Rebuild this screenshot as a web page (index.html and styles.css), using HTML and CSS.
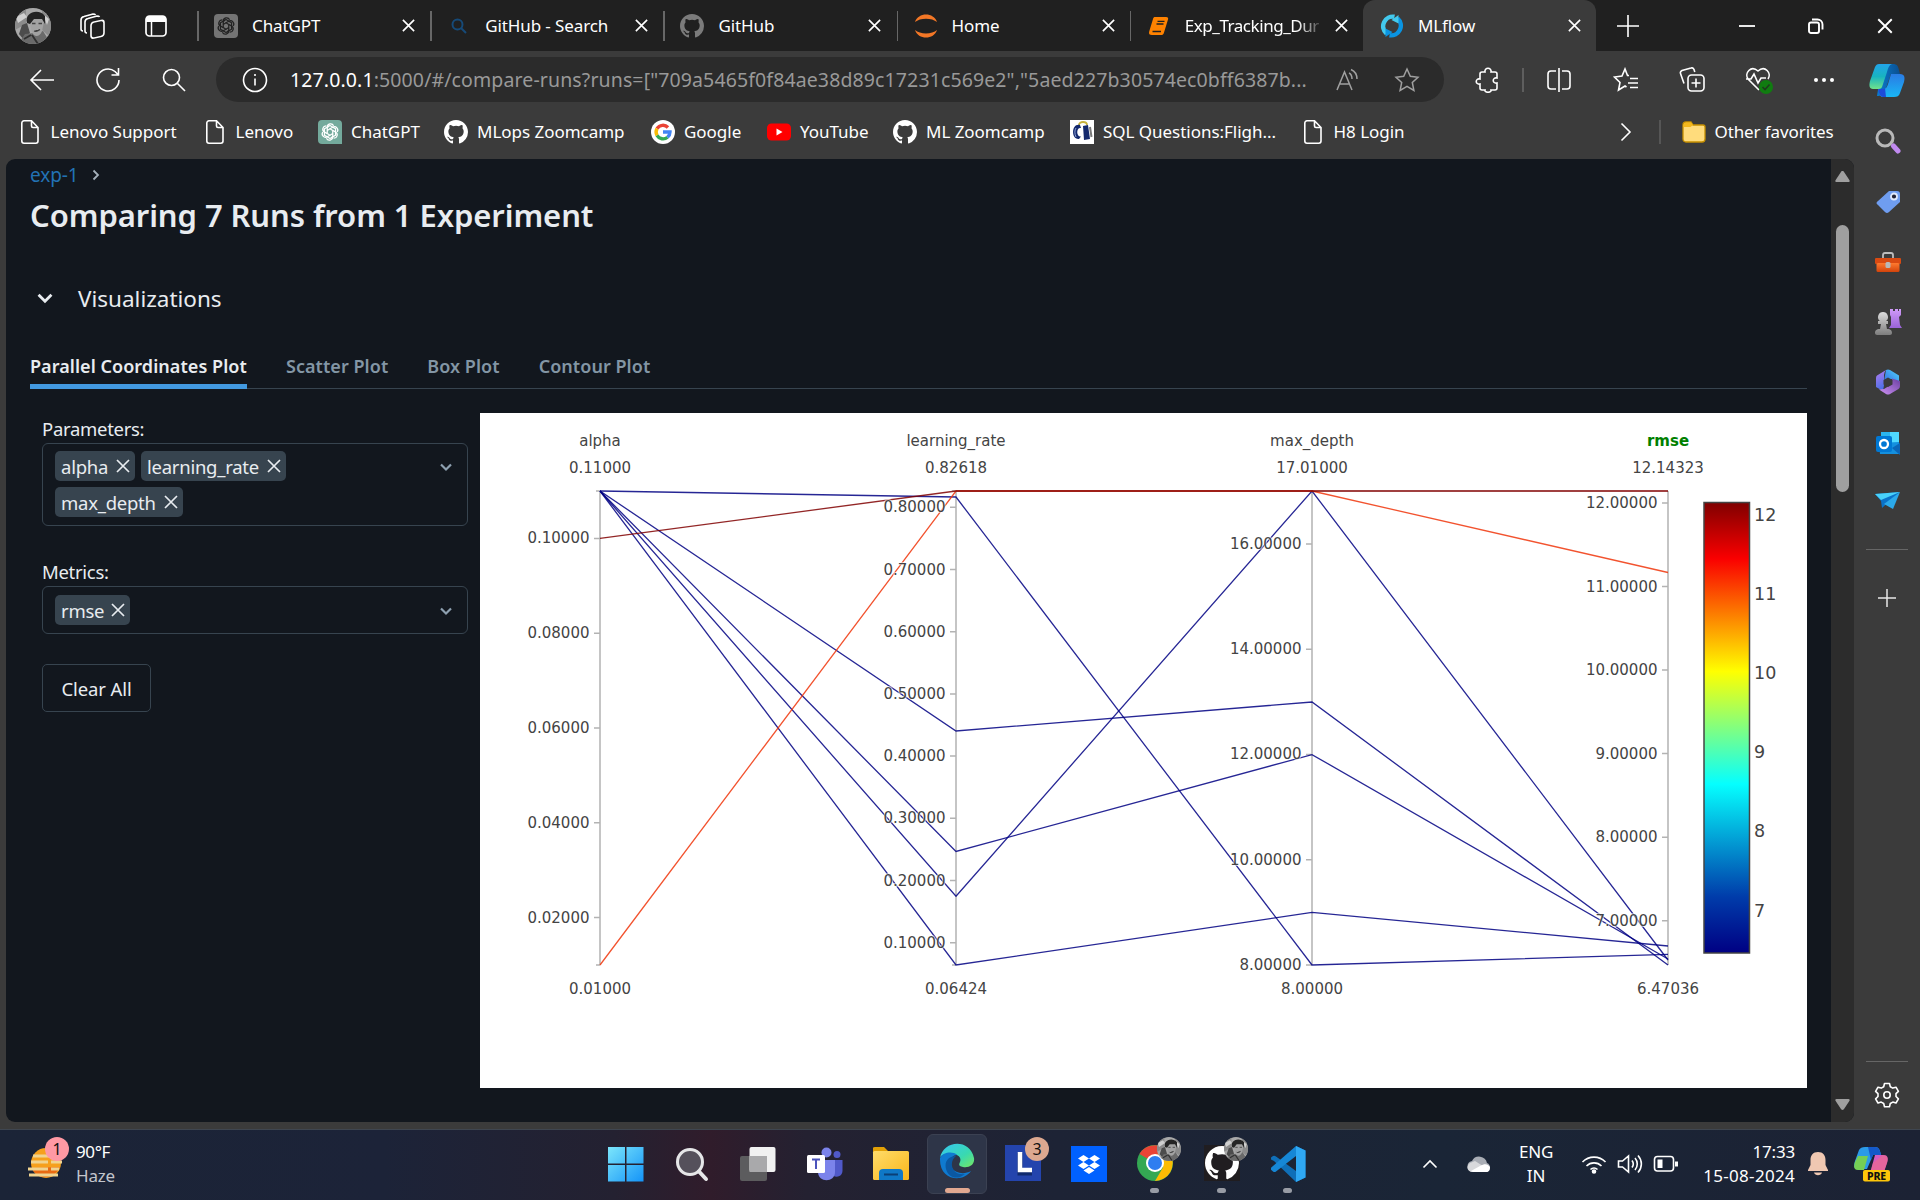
FILE: index.html
```html
<!DOCTYPE html>
<html lang="en">
<head>
<meta charset="utf-8">
<title>MLflow</title>
<link rel="stylesheet" href="styles.css">
</head>
<body>
<svg class="sprite" width="0" height="0" aria-hidden="true">
  <symbol id="close" viewBox="0 0 16 16"><path d="M2 2l12 12M14 2L2 14" fill="none" stroke="currentColor" stroke-width="1.7"/></symbol>
  <symbol id="doc" viewBox="0 0 20 26"><path d="M4 1.8h7.5L18 8.5V22a2.2 2.2 0 0 1-2.2 2.2H4A2.2 2.2 0 0 1 1.800 22V4A2.200 2.200 0 0 1 4 1.800zM11.500 2v5a1.500 1.500 0 0 0 1.500 1.500h5" fill="none" stroke="currentColor" stroke-width="1.6"/></symbol>
  <symbol id="github" viewBox="0 0 16 16"><path fill="currentColor" d="M8 0C3.580 0 0 3.580 0 8c0 3.540 2.290 6.530 5.470 7.590.4.070.55-.17.55-.38 0-.19-.01-.82-.01-1.490-2.010.37-2.530-.49-2.690-.94-.09-.23-.48-.94-.82-1.130-.28-.15-.68-.52-.01-.53.630-.01 1.080.58 1.230.82.720 1.210 1.870.87 2.330.66.070-.52.280-.87.510-1.070-1.780-.2-3.640-.89-3.640-3.950 0-.87.310-1.590.820-2.150-.08-.2-.36-1.020.080-2.120 0 0 .670-.21 2.200.82a7.600 7.600 0 0 1 4 0c1.530-1.040 2.200-.82 2.200-.82.440 1.100.160 1.920.080 2.120.510.56.820 1.270.820 2.150 0 3.070-1.870 3.750-3.650 3.950.290.25.540.73.540 1.480 0 1.070-.01 1.930-.01 2.200 0 .21.150.46.550.38A8 8 0 0 0 16 8c0-4.420-3.580-8-8-8z"/></symbol>
  <symbol id="gpt" viewBox="0 0 24 24"><g fill="none" stroke="currentColor" stroke-width="1.500" stroke-linejoin="round"><path id="petal" d="M12 8.200L8.700 10.100V6.200a4 4 0 0 1 7.600-1.700M8.700 6.200l3.300-1.900 4.600 2.700"/><use href="#petal" transform="rotate(60 12 12)"/><use href="#petal" transform="rotate(120 12 12)"/><use href="#petal" transform="rotate(180 12 12)"/><use href="#petal" transform="rotate(240 12 12)"/><use href="#petal" transform="rotate(300 12 12)"/></g></symbol>
  <symbol id="chev" viewBox="0 0 14 14"><path d="M2 4.500l5 5 5-5" fill="none" stroke="currentColor" stroke-width="2.200"/></symbol>
  <symbol id="face" viewBox="0 0 36 36"><clipPath id="fc"><circle cx="18" cy="18" r="18"/></clipPath><g clip-path="url(#fc)"><rect width="36" height="36" fill="#a9a9a9"/><path d="M0 0h11v16L0 22zM27 0h9v30l-9-8z" fill="#8b8b8b"/><path d="M1 9l8-4 3 4-9 6zM28 6l6 5-2 6z" fill="#cfcfcf"/><path d="M7 17l5-2 3 10-6 7-5-6z" fill="#4c4c4c"/><path d="M3 36l7-10 9-1 9-2 8 13z" fill="#6a6a6a"/><path d="M14 12c0-7 15-7 15 2l-2 9c-2 6-8 7-10 1z" fill="#a2a2a2"/><path d="M12 15C9 4 24 0 30 8l0 8-3-5-8 0-4 5z" fill="#242424"/><path d="M17 15.500h3.500m3 0h3.500M19 23c2 1 4 0 6-1.500" stroke="#444" stroke-width="1.300"/><path d="M17 27l6 9M9 31l7-4" stroke="#303030" stroke-width="1.800"/></g></symbol>
  <symbol id="copilot" viewBox="0 0 36 34"><path d="M13 1h11c4 0 5 2 6 6l1 4h-9l-6 17c-1 4-4 5-8 5z" fill="url(#cpa)"/><path d="M10 1h13c-3 1-4 4-5 8l-5 15c-1 2-3 2-5 2H4c-4 0-4-4-3-8L6 4c1-2 2-3 4-3z" fill="url(#cpb)"/><path d="M9 26h5c3 0 4-2 5-5l3-10h9c5 0 5 4 4 8l-4 11c-1 3-3 4-6 4H14c-4 0-3-5-5-8z" fill="url(#cpc)"/><path d="M9 26h5l2-1 1 9h-3c-3 0-4-4-5-8z" fill="#1d4bd8"/></symbol>
  <defs>
    <linearGradient id="cpa"><stop stop-color="#0a7bd0"/><stop offset="1" stop-color="#0b4f90"/></linearGradient>
    <linearGradient id="cpb" x2="0" y2="1"><stop stop-color="#22a4ea"/><stop offset=".5" stop-color="#18b3c0"/><stop offset="1" stop-color="#6fe28b"/></linearGradient>
    <linearGradient id="cpc" x2="0" y2="1"><stop stop-color="#2a7be4"/><stop offset="1" stop-color="#19b6f5"/></linearGradient>
    <linearGradient id="edgeb" x2="1" y2="1"><stop stop-color="#36c6f4"/><stop offset=".6" stop-color="#39d9b0"/><stop offset="1" stop-color="#77e860"/></linearGradient>
    <linearGradient id="win" x2="1" y2="1"><stop stop-color="#7ce6fb"/><stop offset="1" stop-color="#1494f8"/></linearGradient>
    <linearGradient id="org" x2="0" y2="1"><stop stop-color="#ff7a2f"/><stop offset="1" stop-color="#d2430b"/></linearGradient>
    <linearGradient id="fold" x2="1" y2="1"><stop stop-color="#ffdc6a"/><stop offset="1" stop-color="#f9b61a"/></linearGradient>
    <linearGradient id="violet" x2="0" y2="1"><stop stop-color="#d09bf8"/><stop offset="1" stop-color="#9a63d8"/></linearGradient>
    <linearGradient id="grey" x2="0" y2="1"><stop stop-color="#dcdcdc"/><stop offset="1" stop-color="#7d7d7d"/></linearGradient>
    <linearGradient id="m365a" x1="0" y1="1" x2="1" y2="0"><stop stop-color="#3563e0"/><stop offset="1" stop-color="#4fd4fb"/></linearGradient>
    <linearGradient id="m365b" x2=".3" y2="1"><stop stop-color="#b57cf0"/><stop offset="1" stop-color="#4a6fe6"/></linearGradient>
    <linearGradient id="m365c" x1="0" y1="1" x2="1" y2="0"><stop stop-color="#cf93f5"/><stop offset="1" stop-color="#6a3fa0"/></linearGradient>
    <linearGradient id="jet" x1="0" y1="1" x2="0" y2="0"><stop stop-color="#000083"/><stop offset=".125" stop-color="#003caa"/><stop offset=".375" stop-color="#05ffff"/><stop offset=".625" stop-color="#ffff00"/><stop offset=".875" stop-color="#fa0000"/><stop offset="1" stop-color="#800000"/></linearGradient>
  </defs>
</svg>

<header class="tabstrip">
  <div class="strip-left">
    <svg class="avatar" width="36" height="36"><use href="#face"/></svg>
    <svg width="26" height="26" viewBox="0 0 26 26" class="line"><rect x="11" y="8" width="13" height="16" rx="3" transform="skewY(-12) translate(0 4)"/><path d="M7 20c-1 0-2-1-2-2V9c0-2 1-3 3-3.500l9-2.500c1 0 2 0 2.500 1M3 18c-1 0-2-1-2-2V7c0-2 1-3 3-3.500L13 1c1 0 2 0 2.500 1"/></svg>
    <svg width="22" height="22" viewBox="0 0 22 22"><rect x="1" y="1" width="20" height="20" rx="3.500" fill="none" stroke="#fff" stroke-width="1.700"/><path d="M1 7V4a3 3 0 0 1 3-3h14a3 3 0 0 1 3 3v3z" fill="#fff"/><path d="M6.500 7v14" stroke="#fff" stroke-width="1.500"/></svg>
  </div>
  <div class="tab"><span class="fav"><svg width="24" height="24"><rect width="24" height="24" rx="4" fill="#747474"/><svg x="2" y="2" width="20" height="20" color="#222"><use href="#gpt"/></svg></svg></span><span class="tt">ChatGPT</span><svg class="x"><use href="#close"/></svg></div>
  <div class="tab"><span class="fav"><svg width="16" height="16" viewBox="0 0 16 16" fill="none" stroke="#164a78" stroke-width="2"><circle cx="6.500" cy="6.500" r="5"/><path d="M10 10l5 5"/></svg></span><span class="tt">GitHub - Search</span><svg class="x"><use href="#close"/></svg></div>
  <div class="tab"><span class="fav"><svg width="24" height="24" color="#7b7b7b"><use href="#github"/></svg></span><span class="tt">GitHub</span><svg class="x"><use href="#close"/></svg></div>
  <div class="tab"><span class="fav"><svg width="24" height="24" viewBox="0 0 24 24" fill="#f37726"><path d="M1 8C4-2 20-2 23 8 18 3.500 6 3.500 1 8zM1 16c3 10 19 10 22 0-5 4.500-17 4.500-22 0z"/></svg></span><span class="tt">Home</span><svg class="x"><use href="#close"/></svg></div>
  <div class="tab"><span class="fav"><svg width="22" height="20" viewBox="0 0 22 20"><path d="M7 1h11c2 0 2.500 1 2 2.500l-4 13c-.5 2-1.500 2.500-3 2.500H4c-2.500 0-3.500-1-2.800-3.500L5 3c.4-1.400 1-2 2-2z" fill="#ff8200"/><path d="M9.500 5.300h7M8.500 8h7M4.500 15.500h8.500" stroke="#202020" stroke-width="1.300"/></svg></span><span class="tt fade">Exp_Tracking_Dur</span><svg class="x"><use href="#close"/></svg></div>
  <div class="tab active"><span class="fav"><svg width="24" height="24" viewBox="0 0 24 24" fill="none" stroke-width="4.500"><path d="M6.500 19.500A9.600 9.600 0 0 1 14.500 2.800" stroke="#43c9ed"/><path d="M17.500 4.500A9.600 9.600 0 0 1 9.500 21.200" stroke="#0a94e2"/><path d="M18.500 1v8.500l-7-3.500z" fill="#43c9ed"/><path d="M5.500 23v-8.500l7 3.500z" fill="#0a94e2"/></svg></span><span class="tt">MLflow</span><svg class="x"><use href="#close"/></svg></div>
  <div class="strip-right">
    <svg width="22" height="22" viewBox="0 0 22 22" stroke="#fff" stroke-width="1.600"><path d="M11 0v22M0 11h22"/></svg>
    <svg width="16" height="16" viewBox="0 0 16 16" stroke="#fff" stroke-width="1.800"><path d="M0 8h16"/></svg>
    <svg width="16" height="16" viewBox="0 0 16 16" fill="none" stroke="#fff" stroke-width="1.900"><rect x="1" y="4.500" width="10" height="10.500" rx="2"/><path d="M4 1.500h5.500a5 5 0 0 1 5 5V11.500"/></svg>
    <svg width="18" height="18"><use href="#close"/></svg>
  </div>
</header>

<div class="toolbar">
  <svg class="line" width="26" height="24" viewBox="0 0 26 24"><path d="M25 12H2M12 2L2 12l10 10"/></svg>
  <svg class="line" width="26" height="26" viewBox="0 0 26 26"><path d="M24 13A11 11 0 1 1 20 4.500l3 3M23.500 1v7h-7"/></svg>
  <svg class="line" width="24" height="24" viewBox="0 0 24 24"><circle cx="9.500" cy="9.500" r="8"/><path d="M15.500 15.500l7.500 7.500"/></svg>
  <div class="field">
    <svg class="line" width="26" height="26" viewBox="0 0 26 26"><circle cx="13" cy="13" r="11.500"/><path d="M13 11.500v7M13 7v2"/></svg>
    <span class="url"><b>127.0.0.1</b>:5000/#/compare-runs?runs=["709a5465f0f84ae38d89c17231c569e2","5aed227b30574ec0bff6387b...</span>
    <svg class="dim" width="24" height="24" viewBox="0 0 24 24"><path d="M1 22L8.500 4 16 22M3.500 16h10M13 5c2 1 3 3 3 6M15 1.500c3.500 1.500 6 5 6 9.500"/></svg>
    <svg class="dim" width="26" height="26" viewBox="0 0 26 26"><path d="M13 2l3.300 7.300 7.700.9-5.700 5.300 1.600 7.900L13 19.400l-6.900 4 1.600-7.900L2 10.200l7.700-.9z"/></svg>
  </div>
  <svg class="line" width="24" height="26" viewBox="0 0 24 26"><path d="M7 5h3c-1-5 7-5 6 0h4c1 0 2 1 2 2v4c-5-1-5 6 0 5v5c0 1-1 2-2 2h-4c1 3-7 3-6 0H7c-1 0-2-1-2-2v-4c-5 1-5-6 0-5V7c0-1 1-2 2-2z"/></svg>
  <i class="vsep"></i>
  <svg class="line" width="24" height="26" viewBox="0 0 24 26"><path d="M12 1v24M9 4H4a3 3 0 0 0-3 3v12a3 3 0 0 0 3 3h5M15 4h5a3 3 0 0 1 3 3v12a3 3 0 0 1-3 3h-5"/></svg>
  <svg class="line" width="26" height="26" viewBox="0 0 26 26"><path d="M16 8.500l-1.500 0L12 2 9 9l-7.500 1 5.500 5.500L5.500 23l6.500-4 1.500 1M17 11.500h8M15 16h10M17 20.500h8"/></svg>
  <svg class="line" width="26" height="26" viewBox="0 0 26 26"><rect x="9" y="8" width="16" height="16" rx="3.500"/><path d="M17 11.500v9M12.500 16h9M5 16.500L1.500 6.500c-.5-1.500.5-2.500 1.500-3L12 1c1.500-.5 2.500 0 3 1.500l.8 2.500"/></svg>
  <svg class="line" width="28" height="28" viewBox="0 0 28 28"><path d="M14 24L3 13C-1 7 6-1 13 5c7-6 14 2 10 8M1 13h5l3-5 4 9 3-5h5"/><circle cx="21" cy="21" r="7" fill="#107c10" stroke="none"/><path d="M17.500 21l2.500 2.500 4.500-5" stroke="#1d3c1d"/></svg>
  <svg width="22" height="6" viewBox="0 0 22 6" fill="#fff"><circle cx="3" cy="3" r="2"/><circle cx="11" cy="3" r="2"/><circle cx="19" cy="3" r="2"/></svg>
  <svg width="36" height="34"><use href="#copilot"/></svg>
</div>

<div class="middle">
  <div class="main">
    <nav class="bookmarks">
      <a class="b1"><svg width="20" height="26"><use href="#doc"/></svg>Lenovo Support</a>
      <a class="b2"><svg width="20" height="26"><use href="#doc"/></svg>Lenovo</a>
      <a class="b3"><svg width="24" height="24"><path d="M4 0h16a4 4 0 0 1 4 4v20H4a4 4 0 0 1-4-4V4a4 4 0 0 1 4-4z" fill="#74aa9c"/><svg x="2" y="2" width="20" height="20" color="#fff"><use href="#gpt"/></svg></svg>ChatGPT</a>
      <a class="b4"><svg width="24" height="24"><use href="#github"/></svg>MLops Zoomcamp</a>
      <a class="b5"><svg width="24" height="24" viewBox="0 0 24 24" fill="none" stroke-width="3.400"><circle cx="12" cy="12" r="12" fill="#fff"/><path d="M17 7.500A7 7 0 0 0 6 8.600" stroke="#ea4335"/><path d="M6 8.600a7 7 0 0 0 0 6.800" stroke="#fbbc05"/><path d="M6 15.400a7 7 0 0 0 10.500 1.900" stroke="#34a853"/><path d="M16.500 17.300A7 7 0 0 0 19 12h-7" stroke="#4285f4"/></svg>Google</a>
      <a class="b6"><svg width="24" height="24" viewBox="0 0 24 24"><rect y="3.500" width="24" height="17" rx="4.500" fill="#f00"/><path d="M9.500 8.500v7l6-3.500z" fill="#fff"/></svg>YouTube</a>
      <a class="b7"><svg width="24" height="24"><use href="#github"/></svg>ML Zoomcamp</a>
      <a class="b8"><svg width="24" height="24" viewBox="0 0 24 24"><path fill="#fff" d="M0 0h24v24H0z"/><path d="M9 5c0-4 8-4 8 0" stroke="#c8b23b" stroke-width="1.800" fill="none"/><path d="M10 5C1 3 1 20 9 19l2-2.500c-5 .5-5-9.500 0-8.500zM13 6l5-1 2 14-6 1z" fill="#14296d"/><path d="M6 8c-1.500 2-1.500 6 0 9" stroke="#8fa3d8" fill="none"/><path d="M20 7l1.500 10" stroke="#777" stroke-width="2"/></svg>SQL Questions:Fligh...</a>
      <a class="b9"><svg width="20" height="26"><use href="#doc"/></svg>H8 Login</a>
      <svg class="line more" width="12" height="20" viewBox="0 0 12 20"><path d="M1.500 1.500L10 10l-8.500 8.500"/></svg>
      <i class="vsep"></i>
      <a class="b10"><svg width="24" height="22" viewBox="0 0 24 22"><path d="M1 4a3 3 0 0 1 3-3h5l2 3h10a2 2 0 0 1 2 2v12a3 3 0 0 1-3 3H4a3 3 0 0 1-3-3z" fill="#ffdc7c" stroke="#c79000" stroke-width="1.300"/><path d="M1.500 6h7L11 4 9 1.500H4C2 1.500 1.500 3 1.500 4z" fill="#f3b71b"/></svg>Other favorites</a>
    </nav>
    <div class="viewport">
      <main class="page">
        <div class="crumb">exp-1 <svg width="8" height="12" viewBox="0 0 8 12"><path d="M1.500 1.500L6 6l-4.500 4.500" fill="none" stroke="#a5b1bb" stroke-width="1.800"/></svg></div>
        <h1>Comparing 7 Runs from 1 Experiment</h1>
        <h2><svg width="18" height="18"><use href="#chev"/></svg><span>Visualizations</span></h2>
        <div class="ptabs"><span class="on">Parallel Coordinates Plot</span><span>Scatter Plot</span><span>Box Plot</span><span>Contour Plot</span></div>
        <div class="panel">
          <aside class="controls">
            <label>Parameters:</label>
            <div class="select tall">
              <div class="tags"><span class="t1">alpha<svg><use href="#close"/></svg></span><span class="t2">learning_rate<svg><use href="#close"/></svg></span><span class="t3">max_depth<svg><use href="#close"/></svg></span></div>
              <svg class="drop" width="14" height="14"><use href="#chev"/></svg>
            </div>
            <label class="second">Metrics:</label>
            <div class="select">
              <div class="tags"><span class="t4">rmse<svg><use href="#close"/></svg></span></div>
              <svg class="drop" width="14" height="14"><use href="#chev"/></svg>
            </div>
            <button>Clear All</button>
          </aside>
          <svg class="chart" width="1327" height="675" viewBox="480 413 1327 675">
            <g class="axes">
              <path d="M600 491V965M956 491V965M1312 491V965M1668 491V965"/>
              <path d="M596 491h4M594 538.400h6M594 633.200h6M594 728h6M594 822.800h6M594 917.600h6M596 965h4M952 491h4M950 507.300h6M950 569.500h6M950 631.700h6M950 693.900h6M950 756.100h6M950 818.300h6M950 880.500h6M950 942.700h6M952 965h4M1306 544.100h6M1306 649.300h6M1306 754.600h6M1306 859.800h6M1306 965h6M1662 503h6M1662 586.500h6M1662 670.100h6M1662 753.600h6M1662 837.200h6M1662 920.800h6"/>
            </g>
            <g class="runs">
              <path d="M600 491L956 497L1312 965L1668 954.300"/>
              <path d="M600 491L956 731L1312 702L1668 965"/>
              <path d="M600 491L956 851.500L1312 754.600L1668 959"/>
              <path d="M600 491L956 896.300L1312 491L1668 960"/>
              <path d="M600 491L956 965L1312 912.400L1668 946"/>
              <path class="warm" d="M600 965L956 491L1312 491L1668 572.500"/>
              <path class="hot" d="M600 538.400L956 491"/>
              <path class="hot flat" d="M956 491H1668"/>
            </g>
            <g class="mid"><text x="600" y="445.500">alpha</text><text x="956" y="445.500">learning_rate</text><text x="1312" y="445.500">max_depth</text><text class="target" x="1668" y="445.500">rmse</text>
              <text x="600" y="473">0.11000</text><text x="956" y="473">0.82618</text><text x="1312" y="473">17.01000</text><text x="1668" y="473">12.14323</text>
              <text x="600" y="994">0.01000</text><text x="956" y="994">0.06424</text><text x="1312" y="994">8.00000</text><text x="1668" y="994">6.47036</text></g>
            <g class="ticks"><text x="589.500" y="543.400">0.10000</text><text x="589.500" y="638.200">0.08000</text><text x="589.500" y="733">0.06000</text><text x="589.500" y="827.800">0.04000</text><text x="589.500" y="922.600">0.02000</text>
              <text x="945.500" y="512">0.80000</text><text x="945.500" y="574.500">0.70000</text><text x="945.500" y="636.700">0.60000</text><text x="945.500" y="699">0.50000</text><text x="945.500" y="761">0.40000</text><text x="945.500" y="823">0.30000</text><text x="945.500" y="885.500">0.20000</text><text x="945.500" y="947.700">0.10000</text>
              <text x="1301.500" y="549">16.00000</text><text x="1301.500" y="654">14.00000</text><text x="1301.500" y="759">12.00000</text><text x="1301.500" y="865">10.00000</text><text x="1301.500" y="970">8.00000</text>
              <text x="1657.500" y="508">12.00000</text><text x="1657.500" y="591.500">11.00000</text><text x="1657.500" y="675">10.00000</text><text x="1657.500" y="758.600">9.00000</text><text x="1657.500" y="842">8.00000</text><text x="1657.500" y="926">7.00000</text></g>
            <rect x="1704" y="502.500" width="45.500" height="450.500" fill="url(#jet)" stroke="#444" stroke-width="1.500"/>
            <g class="scale"><text x="1754" y="520.500">12</text><text x="1754" y="599.500">11</text><text x="1754" y="678.700">10</text><text x="1754" y="758">9</text><text x="1754" y="837">8</text><text x="1754" y="916.500">7</text></g>
          </svg>
        </div>
      </main>
      <div class="scroll">
        <svg width="15" height="11" viewBox="0 0 15 11" fill="#9f9f9f"><path d="M7.500 0c.8 0 1.300.5 1.700 1.200l5.300 8c.5 1 0 1.800-1 1.800h-12c-1 0-1.500-.8-1-1.800l5.300-8C6.200.5 6.700 0 7.500 0z"/></svg>
        <i class="thumb"></i>
        <svg class="down" width="15" height="11" viewBox="0 0 15 11" fill="#9f9f9f"><path d="M7.500 11c.8 0 1.300-.5 1.700-1.200l5.300-8c.5-1 0-1.800-1-1.800h-12c-1 0-1.500.8-1 1.800l5.300 8c.4.7.9 1.200 1.700 1.200z"/></svg>
      </div>
    </div>
  </div>
  <aside class="rail">
    <svg width="26" height="26" viewBox="0 0 26 26"><circle cx="10" cy="10" r="8" fill="none" stroke="#b9b9b9" stroke-width="3"/><path d="M18.500 18l4.500 5" stroke="#c18af0" stroke-width="5" stroke-linecap="round"/></svg>
    <svg width="26" height="26" viewBox="0 0 26 26"><path d="M14 2h8q3 0 3 3v8L14 23q-2 2-4 0l-7-7q-3-2 0-4z" fill="#6f9df0"/><circle cx="19" cy="7.500" r="3" fill="#223" stroke="#dfe8fb" stroke-width="1.800"/></svg>
    <svg width="28" height="24" viewBox="0 0 28 24"><path d="M9 8V5q0-2 2-2h6q2 0 2 2v3" fill="none" stroke="#bdbdbd" stroke-width="1.800"/><rect x="1" y="8" width="26" height="6" rx="1" fill="#d94a12"/><rect x="2.500" y="13" width="23" height="9" rx="1.500" fill="url(#org)"/><rect x="11.500" y="12" width="5" height="6" rx="1.500" fill="#b8b8b8"/></svg>
    <svg width="28" height="28" viewBox="0 0 28 28"><path d="M16 1h3v2h2V1h3v2h1V1h2v6l-2 2 1 8 2 3H15l2-3V9l-1-2z" fill="url(#violet)"/><path d="M9 4a5 5 0 0 1 3 9h2v3h-2l1 5c4 0 5 2 5 4 0 1-1 2-2 2H3c-1 0-2-1-2-2 0-2 1-4 5-4l1-5H4v-3h2a5 5 0 0 1 3-9z" fill="url(#grey)"/></svg>
    <svg width="26" height="26" viewBox="0 0 26 26"><path d="M11 1q2-1 4 0l9 5.500v9L17 10l-8 2z" fill="url(#m365a)"/><path d="M11 1L2 6.500Q1 7 1 9v9l7 4 1-6V6q0-3 2-5z" fill="url(#m365b)"/><path d="M25 12v5q0 2-1.500 3L15 25q-2 1-4 0l-7-4.500 5-.5 8-5V9.500z" fill="url(#m365c)"/><path d="M13 8.500l4.500 2.500v4.500L13 18l-4.500-2.500V11z" fill="#3b3b3b"/></svg>
    <svg width="26" height="26" viewBox="0 0 26 26"><path d="M6 2h18v11H6z" fill="#2bb5ee"/><path d="M15 2h9v10h-9z" fill="#50d9ff"/><path d="M4 14l20-2 1 12H5z" fill="#1490df"/><path d="M25 13v12L17 18z" fill="#0a65b8"/><rect x="1" y="6" width="16" height="16" rx="2" fill="#0078d4"/><circle cx="9" cy="14" r="4" fill="none" stroke="#fff" stroke-width="2.300"/></svg>
    <svg width="28" height="20" viewBox="0 0 28 20"><path d="M1 3L26 1 8 17 7 10z" fill="#0a72c8"/><path d="M1 3L26 1 7 9z" fill="#48d1fa"/><path d="M26 1L19 18l-9-5z" fill="#2ba9ea"/></svg>
    <hr>
    <svg class="plus" width="20" height="20" viewBox="0 0 20 20" stroke="#e8e8e8" stroke-width="1.500"><path d="M10 1v18M1 10h18"/></svg>
    <hr class="low">
    <svg class="line gear" width="26" height="26" viewBox="0 0 26 26"><path d="M10.500 1.500h5l.8 3.200 2.500 1.400 3.200-.9 2.400 4.200-2.400 2.300v2.800l2.400 2.300-2.400 4.200-3.200-.9-2.500 1.400-.8 3.200h-5l-.8-3.200-2.500-1.400-3.200.9-2.400-4.200L4 14.500v-2.800L1.600 9.400 4 5.200l3.200.9 2.500-1.400z" stroke-linejoin="round"/><circle cx="13" cy="13" r="3.200"/></svg>
  </aside>
</div>

<footer class="taskbar">
  <div class="weather">
    <svg width="42" height="46" viewBox="0 0 42 46"><circle cx="19" cy="26" r="15" fill="#f6a01c"/><path d="M4.500 31a15 15 0 0 0 28-1z" fill="#e96a12"/><path d="M6 19h26M4 25h17m3 0h11M1 32h20m3 0h8M2 38h29" stroke="#f0d38f" stroke-width="3"/><circle cx="30" cy="12" r="12" fill="#ff99a4"/><text x="30" y="18" class="badge">1</text></svg>
    <p><span>90°F</span><span class="sub">Haze</span></p>
  </div>
  <div class="apps">
    <span><svg width="36" height="36" viewBox="0 0 36 36" fill="url(#win)"><path d="M0 1h17v16.500H0zM18.500 1H35.500v16.500H18.500zM0 19h17v16.500H0zM18.500 19H35.500v16.500H18.500z"/></svg></span>
    <span><svg width="34" height="36" viewBox="0 0 34 36"><circle cx="15" cy="16" r="12.500" fill="#55505b" stroke="#e6e6e8" stroke-width="3"/><path d="M24 25.500l7 7.500" stroke="#e6e6e8" stroke-width="4" stroke-linecap="round"/></svg></span>
    <span><svg width="36" height="36" viewBox="0 0 36 36"><rect y="10" width="27" height="25" rx="2" fill="#5c5c5e"/><rect x="9.500" y="1" width="26" height="25" rx="2" fill="#f1f1f1"/><path d="M9.500 10H27v16H9.500z" fill="#a9a9ab"/></svg></span>
    <span><svg width="36" height="36" viewBox="0 0 36 36"><circle cx="19.500" cy="6.500" r="5" fill="#7b83eb"/><circle cx="30" cy="8.500" r="3.500" fill="#5059c9"/><path d="M24 14h11.500v11a6 6 0 0 1-9 5z" fill="#5059c9"/><path d="M11 14h17v12c0 11-17 11-17 0z" fill="#7b83eb"/><rect y="9" width="18" height="18" rx="1.500" fill="#fff"/><path d="M5 13.500h8M9 13.500V23" stroke="#4b53bc" stroke-width="2"/></svg></span>
    <span><svg width="38" height="36" viewBox="0 0 38 36"><path d="M1 2q0-1 2-1h9l4 4-4 5H1z" fill="#e2a006"/><rect x="1" y="5" width="36" height="29" rx="1.500" fill="url(#fold)"/><path d="M7 34V27q0-4 4-4h16q4 0 4 4v7z" fill="#0f78c6"/><path d="M12 28.500h14" stroke="#0b3f75" stroke-width="2"/></svg></span>
    <span class="current"><svg width="36" height="36" viewBox="0 0 36 36"><path d="M1 15C4-3 31-5 35 15c1 7-5 10-11 9-5-1-4-3-3-5 2-5-3-8-8-8C7 10 2 12 1 15z" fill="url(#edgeb)"/><path d="M1 15c3-6 13-7 17-3-6 0-8 7-5 13 3 5 12 7 19 3C24 40 0 38 1 15z" fill="#0f7ad0"/><path d="M17 13c-8 6-4 20 9 18-8 7-17 3-19-5s3-13 10-13z" fill="#0b58a2"/></svg><i></i></span>
    <span><svg class="pop" width="46" height="46" viewBox="0 0 46 46"><path d="M0 8h36v36H0z" fill="#2444ad"/><path d="M15 16v20h12" fill="none" stroke="#102a6e" stroke-width="5"/><path d="M15 15v18h12" fill="none" stroke="#fff" stroke-width="4.500"/><circle cx="32" cy="12" r="12" fill="#dca890"/><text x="32" y="18" class="badge">3</text></svg></span>
    <span><svg width="36" height="36" viewBox="0 0 36 36"><path fill="#0061ff" d="M0 0h36v36H0z"/><path d="M12.500 9l5.500 3.500-5.500 3.500L7 12.500zM23.500 9l5.500 3.500-5.500 3.500-5.500-3.500zM12.500 16l5.500 3.500-5.500 3.500L7 19.500zM23.500 16l5.500 3.500-5.500 3.500-5.500-3.500zM18 21l5.500 3.500L18 28l-5.500-3.500z" fill="#fff"/></svg></span>
    <span class="run"><svg class="pop" width="46" height="46" viewBox="0 0 46 46"><circle cx="18" cy="26" r="18" fill="#34a853"/><path d="M18 26L2.500 17A18 18 0 0 1 33.500 17z" fill="#ea4335"/><path d="M18 17.500h15.600A18 18 0 0 1 18 44l8-13.500z" fill="#fbbc04"/><circle cx="18" cy="26" r="9" fill="#fff"/><circle cx="18" cy="26" r="7" fill="#2f7df0"/><svg x="20" y="0" width="24" height="24"><use href="#face"/></svg></svg><i></i></span>
    <span class="run"><svg class="pop" width="46" height="46" viewBox="0 0 46 46"><path fill="#201d20" d="M0 8h36v36H0z"/><svg x="1" y="9" width="34" height="34" color="#fff"><use href="#github"/></svg><svg x="20" y="0" width="24" height="24"><use href="#face"/></svg></svg><i></i></span>
    <span class="run"><svg width="36" height="36" viewBox="0 0 36 36"><path d="M26 0l9.500 4.500v27L26 36 4 15 1 13.500v-2L3 10q1.500-.7 3 .5L26 25z" fill="#0f6fb8"/><path d="M26 0v10L6 25.500q-1.500 1-3 0l-2-1.700v-2z" fill="#1687d6"/><path d="M26 0l9.500 4.500v27L26 36z" fill="#2fa8f3"/></svg><i></i></span>
  </div>
  <div class="tray">
    <svg class="line caret" width="16" height="10" viewBox="0 0 16 10"><path d="M1.500 8.500L8 2l6.500 6.500"/></svg>
    <svg class="cloud" width="24" height="18" viewBox="0 0 24 18"><path d="M6 17a5.500 5.500 0 0 1-1-10.900A8 8 0 0 1 20 8a4.700 4.700 0 0 1-1 9z" fill="#a9adb5"/><path d="M3 8l5-2 8 5-10 6c-5 0-8-5-3-9z" fill="#d8d9dc"/><path d="M4 16l9-5c5-3 8-2 10 1 0 3-1 5-4 5H6z" fill="#fff"/></svg>
    <p class="lang"><span>ENG</span><span>IN</span></p>
    <svg class="line wifi" width="26" height="20" viewBox="0 0 26 20"><path d="M1.500 8a16 16 0 0 1 23 0M5.500 12a10.500 10.500 0 0 1 15 0M9.500 15.500a5 5 0 0 1 7 0"/><circle cx="13" cy="17.500" r="1.500" fill="#fff"/></svg>
    <svg class="line spk" width="26" height="20" viewBox="0 0 26 20"><path d="M1.500 7h4l6-5v16l-6-5h-4zM15 6.500c1.500 2 1.500 5 0 7M18 4c3 3.500 3 8.500 0 12M21 1.500c4.500 5 4.500 12 0 17"/></svg>
    <svg class="line bat" width="26" height="18" viewBox="0 0 26 18"><rect x="1.500" y="1.500" width="19" height="14.500" rx="3"/><path d="M23.500 6.500v5" stroke-width="3"/><rect x="4.500" y="4.500" width="5" height="8.500" fill="#fff" stroke="none"/></svg>
    <p class="clock"><span>17:33</span><span class="date">15-08-2024</span></p>
    <svg class="bell" width="22" height="24" viewBox="0 0 22 24"><path d="M11 0c5 0 7.500 3.500 7.500 8v5l2.500 5v1H1v-1l2.500-5V8c0-4.500 2.500-8 7.500-8zM7 20.500h8c-1 3.500-7 3.500-8 0z" fill="#f0c8b2"/></svg>
    <svg class="cop" width="38" height="36" viewBox="0 0 38 36"><path d="M11 1h10c4 0 5 3 6 8h-8L13 23H3c-4 0-3-5-2-8L5 4c1-2 3-3 6-3z" fill="#2b9be8"/><path d="M4 10h10L10 24H4c-5 0-4-5-3-8z" fill="#75cf55"/><path d="M14 1h7c4 0 5 3 6 8h-8l-2 5z" fill="#1559c9"/><path d="M21 9h8c6 0 5 5 4 8l-4 12H12c4-1 5-5 6-9z" fill="#d65cc0"/><path d="M29 9c6 0 5 5 4 8l-3 8-14 2 3-10z" fill="#ef6a86" opacity=".6"/><rect x="9" y="24" width="27" height="11.500" rx="2" fill="#fdc60a"/><text x="22.500" y="33.500" class="pre">PRE</text></svg>
  </div>
</footer>
</body>
</html>
```
FILE: styles.css
```css
* { box-sizing: border-box; }
body {
  margin: 0;
  width: 1920px;
  height: 1200px;
  overflow: hidden;
  display: flex;
  flex-direction: column;
  background: #3b3b3b;
  color: #fff;
  font-family: "Noto Sans", "Open Sans", sans-serif;
  font-size: 17px;
}
.sprite { position: absolute; }
svg { flex: none; display: block; }
p { margin: 0; }
.line { fill: none; stroke: #fff; stroke-width: 1.6; }
.dim { fill: none; stroke: #a0a0a0; stroke-width: 1.5; }

/* Tab strip */
.tabstrip { height: 51px; flex: none; display: flex; background: #202020; }
.strip-left { width: 197px; display: flex; align-items: center; padding-left: 15px; gap: 29px; }
.strip-left svg:last-child { margin-left: 10px; }
.tab { width: 233.2px; display: flex; align-items: center; position: relative; white-space: nowrap; letter-spacing: -0.1px; }
.tab::before { content: ""; width: 1.5px; height: 30px; background: #676767; }
.fav { width: 24px; margin-left: 15.5px; display: flex; justify-content: center; }
.tt { width: 134px; margin-left: 14px; }
.x { width: 15px; height: 15px; margin-left: 15px; }
.fade { letter-spacing: -0.45px; -webkit-mask-image: linear-gradient(90deg, #000 84%, transparent 104%); mask-image: linear-gradient(90deg, #000 84%, transparent 104%); }
.tab.active { background: #3b3b3b; border-radius: 12px 12px 0 0; }
.tab.active::before { visibility: hidden; }
.strip-right { display: flex; align-items: center; padding-left: 21px; }
.strip-right svg:nth-child(2) { margin-left: 100px; }
.strip-right svg:nth-child(3) { margin-left: 53px; }
.strip-right svg:nth-child(4) { margin-left: 52px; }

/* Toolbar */
.toolbar { height: 57px; flex: none; display: flex; align-items: center; padding-left: 29px; }
.toolbar > svg:nth-child(2) { margin-left: 40px; }
.toolbar > svg:nth-child(3) { margin-left: 41px; }
.field {
  width: 1228px;
  height: 45px;
  margin: 0 31px 0 30px;
  padding-left: 26px;
  display: flex;
  align-items: center;
  background: #2b2b2b;
  border-radius: 23px;
}
.url { width: 1021px; margin: 0 25px 0 22px; color: #999; font-size: 19.5px; letter-spacing: 0.12px; white-space: nowrap; }
.url b { font-weight: 400; color: #fff; }
.field .dim:last-child { margin-left: 34px; }
.vsep { width: 1.5px; height: 24px; background: #5e5e5e; }
.toolbar .vsep { margin: 0 23px 0 23px; }
.toolbar .vsep + svg + svg { margin-left: 42px; }
.toolbar .vsep + svg + svg + svg { margin-left: 40px; }
.toolbar .vsep + svg + svg + svg + svg { margin-left: 40px; }
.toolbar .vsep + svg + svg + svg + svg + svg { margin-left: 40px; }
.toolbar .vsep + svg + svg + svg + svg + svg + svg { margin-left: 34px; }

.middle { display: flex; height: 1021px; flex: none; }
.main { width: 1854px; padding-left: 6px; }
.bookmarks { height: 51px; display: flex; align-items: center; padding: 0 0 4px 14px; white-space: nowrap; letter-spacing: -0.03px; }
.bookmarks a { display: flex; align-items: center; gap: 9px; }
.b1 { width: 185px; } .b2 { width: 113px; } .b3 { width: 126px; } .b4 { width: 207px; } .b5 { width: 116px; }
.b6 { width: 126px; } .b7 { width: 177px; } .b8 { width: 233px; } .b9 { width: 317px; }
.bookmarks .b1, .bookmarks .b2, .bookmarks .b9 { gap: 10.500px; }
.bookmarks .vsep { margin: 0 21px 0 27px; background: #565656; }
.bookmarks .b10 { letter-spacing: -0.1px; }

/* Page */
.viewport { height: 963px; display: flex; background: #12171e; border-radius: 9px; overflow: hidden; }
.page { width: 1825px; padding: 3px 24px 0; color: #e8ecf0; }
.crumb { height: 26px; display: flex; align-items: center; gap: 13px; color: #2272b4; font-size: 19px; letter-spacing: -0.1px; }
h1 { margin: 5px 0 0; height: 44px; line-height: 44px; font-size: 31px; font-weight: 600; white-space: nowrap; letter-spacing: -0.080px; }
h2 { margin: 43px 0 0; height: 36px; display: flex; align-items: center; padding-left: 6px; font-size: 22.500px; font-weight: 400; }
h2 span { margin-left: 24px; }
.ptabs { display: flex; gap: 39px; height: 49px; margin-top: 24px; padding-top: 12px; border-bottom: 1px solid #37444f; line-height: 29px; font-size: 18px; font-weight: 600; letter-spacing: 0.05px; color: #8396a5; white-space: nowrap; }
.ptabs span { height: 37px; }
.ptabs .on { color: #e8ecf0; border-bottom: 5px solid #4299e0; width: 217px; }
.panel { display: flex; margin-top: 24px; }
.controls { width: 450px; padding-left: 12px; font-size: 18.500px; letter-spacing: -0.1px; }
label { display: block; height: 27px; line-height: 26px; margin-top: 3px; letter-spacing: -0.3px; }
label.second { margin-top: 33px; }
.select { width: 426px; height: 48px; border: 1px solid #37444f; border-radius: 6px; display: flex; justify-content: space-between; padding: 8px 14px 0 12px; }
.select.tall { height: 83px; padding-top: 7px; }
.tags { width: 300px; display: flex; flex-wrap: wrap; gap: 6px; align-content: flex-start; }
.tags span { height: 30px; display: flex; align-items: center; justify-content: space-between; padding: 1px 4px 1px 6px; background: #37444f; border-radius: 5px; letter-spacing: -0.25px; }
.tags svg { width: 16px; height: 16px; }
.t1 { width: 80px; } .t2 { width: 145px; } .t3 { width: 128px; } .t4 { width: 75px; }
.drop { color: #8ea0b0; margin-top: 9px; }
button { display: block; margin-top: 30px; width: 109px; height: 48px; padding: 0; border: 1px solid #37444f; border-radius: 5px; background: none; color: #e8ecf0; font: inherit; letter-spacing: -0.1px; }

/* Chart */
.chart { background: #fff; font-family: "DejaVu Sans", Verdana, sans-serif; font-size: 15px; }
.chart text { fill: #444; }
.axes { fill: none; stroke: #b3b3b3; stroke-width: 1.5; }
.runs { fill: none; stroke: #000083; stroke-opacity: .85; stroke-width: 1.3; }
.runs .warm { stroke: #f0350a; }
.runs .hot { stroke: #800000; }
.runs .flat { stroke-width: 2; stroke-opacity: .75; }
.mid { text-anchor: middle; }
.chart .target { fill: green; font-weight: 700; }
.ticks { text-anchor: end; paint-order: stroke; stroke: #fff; stroke-opacity: .6; stroke-width: 2px; }
.scale { font-size: 17.500px; }

.scroll { width: 23px; display: flex; flex-direction: column; align-items: center; padding: 12px 0 12px; background: #2c2c2c; }
.thumb { width: 13px; height: 267px; margin-top: 43px; border-radius: 7px; background: #9f9f9f; }
.down { margin-top: auto; }

/* Sidebar */
.rail { width: 66px; display: flex; flex-direction: column; align-items: center; padding-top: 20px; }
.rail svg { margin: 0 0 34.500px 1px; }
.rail svg:nth-child(2) { margin-bottom: 35px; }
.rail svg:nth-child(4) { margin-bottom: 33px; }
.rail svg:nth-child(6) { margin-bottom: 35.500px; }
.rail svg:nth-child(7) { margin-bottom: 0; }
.rail hr { width: 42px; height: 1px; margin: 38px 0 0 0; border: 0; background: #666; }
.rail .plus { margin: 38px 1px 0 0; }
.rail hr.low { margin-top: 453px; }
.rail .gear { margin: 20px 0 0; }

/* Taskbar */
.taskbar {
  height: 71px;
  flex: none;
  display: flex;
  align-items: stretch;
  border-top: 1px solid #3f4650;
  background: linear-gradient(90deg, #1b2437 0, #1c2338 20%, #242131 32%, #301c2b 37%, #242131 42%, #1d2335 55%, #1a2536 75%, #1c2234 100%);
  font-size: 17px;
  letter-spacing: -0.2px;
}
.weather { width: 593px; display: flex; padding: 7px 0 0 27px; gap: 7px; }
.weather span:first-child { letter-spacing: -0.4px; }
.taskbar p { display: flex; flex-direction: column; line-height: 24px; }
.weather p { padding-top: 3px; }
.sub { color: #c2c5cc; }
.badge { font-size: 16px; fill: #111; text-anchor: middle; }
.apps { display: flex; }
.apps span { width: 66.200px; display: flex; align-items: center; justify-content: center; position: relative; padding-bottom: 2px; }
.pop { margin: -8px -10px 0 0; }
.apps .current { width: 60px; height: 60px; margin: 4px 3px 0; padding-bottom: 6px; background: #2e3548; border: 1px solid #3b4152; border-radius: 6px; }
.apps i { position: absolute; bottom: 7px; left: 28px; width: 9px; height: 5px; border-radius: 3px; background: #989ca5; }
.apps .current i { bottom: 0; left: 17px; width: 25px; background: #e2a890; }
.tray { display: flex; align-items: center; margin-left: auto; padding: 0 28px 2px 0; }
.cloud { margin-left: 29px; }
.lang { width: 40px; margin-left: 25px; text-align: center; }
.wifi { margin-left: 25px; }
.spk { margin-left: 10px; }
.bat { margin-left: 10px; }
.clock { width: 116px; text-align: right; }
.date { letter-spacing: 0.3px; }
.bell { margin-left: 12px; }
.cop { margin-left: 25px; }
.pre { font-size: 10.500px; font-weight: 800; text-anchor: middle; fill: #111; }
```
